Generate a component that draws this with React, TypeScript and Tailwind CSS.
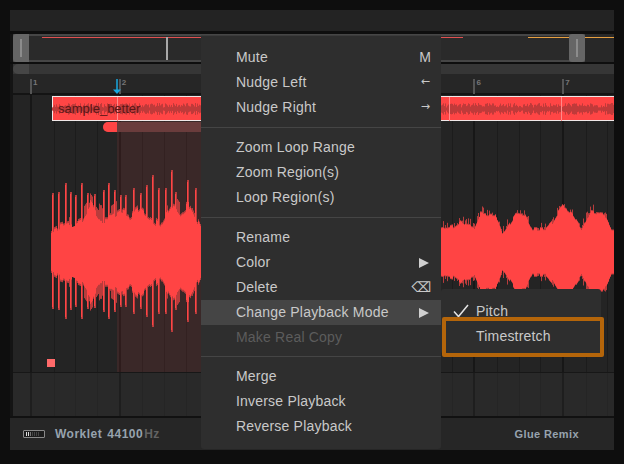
import React from "react";

const font = "font-['Liberation_Sans',Arial,sans-serif]";

// waveform outline read off the screenshot: [x, half height]
const coreLeft = [[50, 19], [60, 25], [73, 29], [80, 32], [90, 47], [100, 32], [110, 32], [120, 39], [130, 35], [140, 44], [150, 35], [160, 25], [173, 49], [180, 39], [190, 49], [200, 25], [300, 40], [441, 30]];
const coreRight = [[441, 22], [452, 25], [460, 30], [466, 26], [474, 24], [480, 38], [495, 37], [502, 17], [508, 26], [515, 37], [525, 36], [532, 22], [545, 22], [552, 30], [562, 46], [572, 38], [582, 22], [590, 40], [604, 38], [612, 20], [614, 20]];
const spikes = [[52, 59], [58, 60], [65, 69], [70, 60], [75, 57], [81, 69], [87, 59], [94, 58], [103, 62], [108, 69], [114, 62], [120, 57], [125, 57], [133, 64], [140, 59], [146, 67], [152, 77], [158, 64], [165, 64], [171, 82], [175, 60], [187, 72], [195, 64]];

const lerp = (pts: number[][], x: number) => {
  for (let i = 1; i < pts.length; i++) {
    if (x <= pts[i][0]) {
      const [x0, y0] = pts[i - 1];
      const [x1, y1] = pts[i];
      return y0 + ((y1 - y0) * (x - x0)) / (x1 - x0);
    }
  }
  return pts[pts.length - 1][1];
};

const noise = (x: number) => {
  const s = Math.sin(x * 12.9898) * 43758.5453;
  return s - Math.floor(s);
};

function buildWave() {
  let core = "";
  let edge = "";
  for (let x = 51; x < 614; x++) {
    const left = x < 441;
    const pts = left ? coreLeft : coreRight;
    const step = Math.floor(x / 3);
    const h = lerp(pts, x) + (noise(step) - 0.5) * (left ? 10 : 4);
    core += `M${x + 0.5} ${102 - h}V${102 + h}`;
    const extra = left ? (noise(step + 7) > 0.5 ? noise(step + 3) * 16 : 2) : noise(x + 7) > 0.65 ? noise(x + 3) * 8 : 1;
    edge += `M${x + 0.5} ${102 - h - extra}V${102 + h + extra}`;
  }
  let tall = "";
  let bright = "";
  spikes.forEach(([x, h]) => {
    tall += `M${x + 1} ${102 - h}V${102 + h - 2}`;
    bright += `M${x + 0.5} ${102 - h + 2}V${102 + h - 4}`;
  });
  return { core, edge, tall, bright };
}

function buildClipWave() {
  let d = "";
  for (let x = 52; x < 614; x++) {
    const h = 1.5 + noise(x + 21) * 4.5;
    d += `M${x + 0.5} ${12 - h}V${12 + h}`;
  }
  return d;
}

const wave = buildWave();
const clipWave = buildClipWave();

const bars = [0, 1, 2, 3, 4, 5, 6];
// bars 3 to 5 have their numbers behind the menu
const shownLabels = [0, 1, 5, 6];

function Grid({ lower }: { lower?: boolean }) {
  return (
    <div className="flex h-full">
      <div className="w-[17px] shrink-0" />
      {bars.map((b) => (
        <div key={b} className={`w-[88.7px] shrink-0 grid grid-cols-4 border-l-2 ${lower ? "border-[#1e1e1e]" : "border-[#171717]"}`}>
          <div />
          <div className={`border-l ${lower ? "border-[#252525]" : "border-[#1c1c1c]"}`} />
          <div className={`border-l ${lower ? "border-[#252525]" : "border-[#1c1c1c]"}`} />
          <div className={`border-l ${lower ? "border-[#252525]" : "border-[#1c1c1c]"}`} />
        </div>
      ))}
    </div>
  );
}

function Row({ label, right, hover, disabled }: { label: string; right?: string; hover?: boolean; disabled?: boolean }) {
  const arrow = right === "←" || right === "→";
  return (
    <div className={`h-[25px] flex items-center justify-between pl-[35px] pr-[10px] ${hover ? "bg-[#454545]" : ""} ${disabled ? "text-[#5c5c5c]" : "text-[#c9c9c9]"}`}>
      <span>{label}</span>
      {right === "sub" && (
        <svg className="mr-[2px]" width="10" height="10" viewBox="0 0 10 10">
          <path d="M0 0L10 5L0 10Z" fill="#d0d0d0" />
        </svg>
      )}
      {right === "⌫" && <span className="text-[14px] tracking-normal font-['DejaVu_Sans',sans-serif]">⌫</span>}
      {arrow && <span className="text-[11px] pr-[1px] tracking-normal font-['DejaVu_Sans',sans-serif]">{right}</span>}
      {right === "M" && <span className="tracking-normal">M</span>}
    </div>
  );
}

export default function App() {
  return (
    <div className={`relative w-[624px] h-[464px] overflow-hidden bg-[#0e0e0e] pt-[10px] pl-[10px] pr-[10px] ${font}`}>
      <div className="flex flex-col w-[604px] h-[440px] bg-[#141414]">
        {/* top bar */}
        <div className="h-[21px] bg-[#232323] shrink-0" />
        <div className="h-[3px] shrink-0 bg-[#0e0e0e]" />

        {/* overview */}
        <div className="relative h-[28px] shrink-0 ml-[3px] bg-[#2a2a2a] border-t-2 border-b-2 border-[#464646]">
          <div className="absolute left-[29px] top-[1px] w-[421px] h-px bg-[#e05050]" />
          <div className="absolute left-[515px] top-[1px] w-[86px] h-px bg-[#e8a040]" />
          <div className="absolute left-[153px] top-[1px] w-[2px] h-[23px] bg-[#a8a8a8]" />
          <div className="absolute left-0 -top-[2px] w-[16px] h-[28px] bg-[#666] rounded-l-[3px] flex items-center justify-center">
            <div className="w-[2px] h-[18px] bg-[#8c8c8c]" />
          </div>
          <div className="absolute left-[556px] -top-[2px] w-[16px] h-[28px] bg-[#666] rounded-[3px] flex items-center justify-center">
            <div className="w-[2px] h-[18px] bg-[#8c8c8c]" />
          </div>
          <div className="absolute left-[572px] -top-[2px] right-0 h-[28px] bg-[#282828]">
            <div className="mt-[3px] h-px bg-[#e8a040]" />
          </div>
        </div>
        <div className="h-[2px] shrink-0 bg-[#0e0e0e]" />

        {/* scrollbar */}
        <div className="h-[10px] shrink-0 ml-[3px] bg-[#363636]">
          <div className="w-[16px] h-full bg-[#464646] rounded-l-[5px]" />
        </div>

        {/* ruler */}
        <div className="relative h-[21px] shrink-0 ml-[3px] bg-[#262626] flex pl-[17px] border-b-2 border-[#141414]">
          {bars.map((b) => (
            <div key={b} className="w-[88.7px] shrink-0 flex items-start">
              <div className="w-[2px] h-[15px] mt-[5px] bg-[#555]" />
              {shownLabels.includes(b) && <span className="ml-[1px] mt-[3px] text-[8px] font-bold leading-[11px] text-[#777]">{b + 1}</span>}
            </div>
          ))}
          <svg className="absolute left-[99px] top-[5px]" width="10" height="16" viewBox="0 0 10 16">
            <path d="M5 0V12" stroke="#18a8e0" strokeWidth="1.5" />
            <path d="M1 10.5H9L5 15Z" fill="#18a8e0" />
          </svg>
        </div>

        {/* arrangement */}
        <div className="relative h-[321px] shrink-0 ml-[3px] bg-[#262626] overflow-hidden">
          <div className="h-[277px] bg-[#242424]">
            <Grid />
          </div>
          <div className="h-px bg-[#171717]" />
          <div className="h-[43px] bg-[#292929]">
            <Grid lower />
          </div>

          {/* loop tint */}
          <div className="absolute left-[104px] top-[26px] bottom-[44px] w-[300px] bg-[#ff5050]/10" />

          {/* sample clip */}
          <div className="absolute left-[39px] top-[1px] right-0 h-[25px] bg-[#ff4545] border border-r-0 border-[#f0e8e8]">
            <svg className="absolute -left-[53px] top-0" width="620" height="24" viewBox="0 0 620 24">
              <path d={clipWave} stroke="#c03a3a" strokeWidth="1" />
              <path d="M117.5 0V24M449.5 0V24M561.5 0V24" stroke="#ff8a8a" strokeWidth="1" />
            </svg>
            <span className="absolute left-[5px] top-[3px] text-[13px] leading-[17px] text-[#5a1616]">sample_better</span>
          </div>

          {/* automation bar */}
          <div className="absolute left-[90px] top-[27px] w-[300px] h-[10px] rounded-l-[5px] bg-[#6a3c3c] overflow-hidden">
            <div className="w-[14px] h-full bg-[#ff4545]" />
          </div>

          {/* audio */}
          <svg className="absolute -left-[13px] top-[55px]" width="624" height="204" viewBox="0 0 624 204">
            <path d={wave.tall} stroke="#b83c3c" strokeWidth="2" />
            <path d={wave.edge} stroke="#b83c3c" strokeWidth="1" />
            <path d={wave.bright} stroke="#ff4444" strokeWidth="1" />
            <path d={wave.core} stroke="#ff4444" strokeWidth="1" />
          </svg>

          <div className="absolute left-[34px] top-[264px] w-[8px] h-[8px] bg-[#ff6a6a]" />
        </div>

        <div className="h-[2px] shrink-0 bg-[#111]" />

        {/* status bar */}
        <div className="flex-1 bg-[#262626] flex items-center pl-[13px]">
          <div className="w-[22px] h-[8px] border border-[#8a8a8a] rounded-[1px] bg-[#1c1c1c] flex items-center pl-[2px] gap-px">
            <div className="w-px h-[4px] bg-[#ddd]" />
            <div className="w-px h-[4px] bg-[#ddd]" />
            <div className="w-px h-[4px] bg-[#777]" />
            <div className="w-px h-[4px] bg-[#444]" />
            <div className="w-px h-[4px] bg-[#444]" />
            <div className="w-px h-[4px] bg-[#444]" />
            <div className="w-px h-[4px] bg-[#444]" />
          </div>
          <span className="ml-[10px] text-[12px] font-bold tracking-[0.5px] text-[#97a3ae]">Worklet</span>
          <span className="ml-[5px] text-[12px] font-bold tracking-[0.5px] text-[#97a3ae]">44100</span>
          <span className="ml-px text-[12px] font-bold tracking-[0.5px] text-[#626262]">Hz</span>
          <span className="ml-auto mr-[35px] text-[11px] font-bold tracking-[0.4px] text-[#97a3ae]">Glue Remix</span>
        </div>
      </div>

      {/* context menu */}
      <div className="absolute left-[201px] top-[35px] w-[240px] h-[414px] pt-[9px] bg-[#2e2e2e] border-t border-[#3c3c3c] rounded-b-[3px] text-[14px] tracking-[0.2px]">
        <Row label="Mute" right="M" />
        <Row label="Nudge Left" right="←" />
        <Row label="Nudge Right" right="→" />
        <div className="my-[7px] h-px bg-[#454545]" />
        <Row label="Zoom Loop Range" />
        <Row label="Zoom Region(s)" />
        <Row label="Loop Region(s)" />
        <div className="my-[7px] h-px bg-[#454545]" />
        <Row label="Rename" />
        <Row label="Color" right="sub" />
        <Row label="Delete" right="⌫" />
        <Row label="Change Playback Mode" right="sub" hover />
        <Row label="Make Real Copy" disabled />
        <div className="mt-[6px] mb-[7px] h-px bg-[#454545]" />
        <Row label="Merge" />
        <Row label="Inverse Playback" />
        <Row label="Reverse Playback" />
      </div>

      {/* submenu */}
      <div className="absolute left-[441px] top-[289px] w-[160px] h-[65px] pt-[10px] bg-[#2e2e2e] rounded-[3px] text-[14px] tracking-[0.2px] text-[#c9c9c9]">
        <div className="h-[25px] flex items-center pl-[35px]">Pitch</div>
        <div className="h-[25px] flex items-center pl-[35px]">Timestretch</div>
        <svg className="absolute left-[12px] top-[15px]" width="16" height="14" viewBox="0 0 16 14">
          <path d="M1 7.5L5.5 12.5L15 1" fill="none" stroke="#e4e4e4" strokeWidth="1.5" />
        </svg>
      </div>

      {/* tutorial highlight */}
      <div className="absolute left-[442px] top-[317px] w-[162px] h-[40px] border-4 border-[#b4650a] rounded-[2px]" />
    </div>
  );
}
